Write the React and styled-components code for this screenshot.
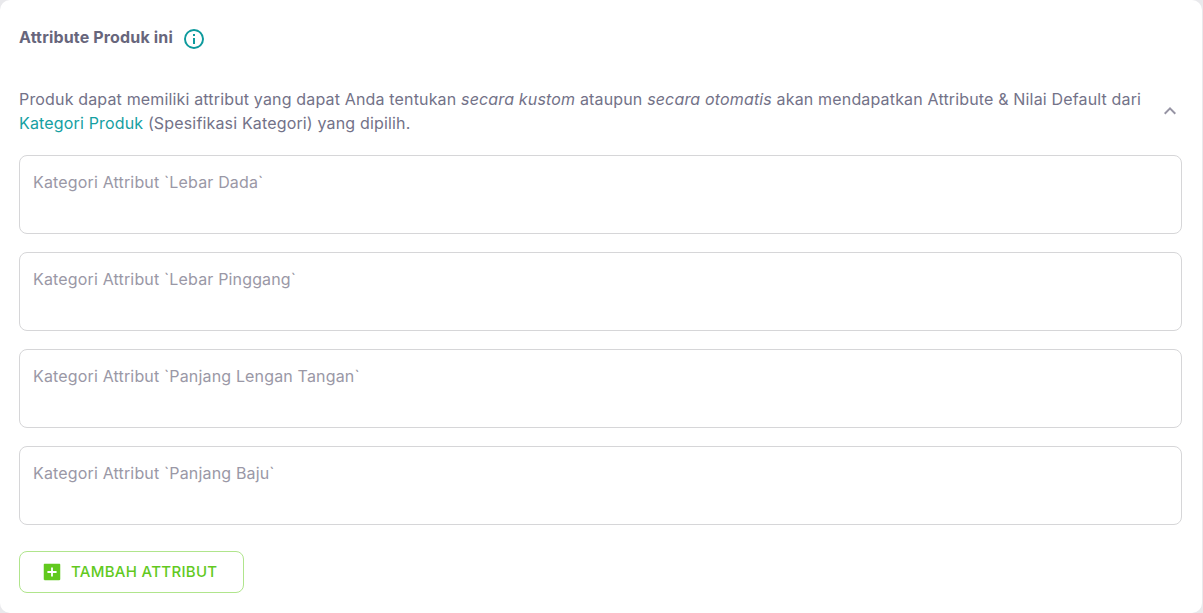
import React from "react";
import styled, { createGlobalStyle } from "styled-components";

const GlobalStyle = createGlobalStyle`
  *, *::before, *::after { box-sizing: border-box; }
  body {
    margin: 0;
    background: #e9e9ec;
    color: #737288;
    font-family: Inter, "Liberation Sans", sans-serif;
    font-size: 16px;
    font-weight: 400;
    line-height: 24px;
    letter-spacing: 0.01em;
  }
`;

const Card = styled.section`
  background: #fff;
  border-radius: 10px;
  padding: 25px 20px 20px 19px;
  margin-right: 1px;
`;

const Header = styled.header`
  display: flex;
  align-items: flex-start;
  gap: 9px;
`;

const Title = styled.h2`
  margin: 0;
  color: #67667c;
  font-size: 16px;
  font-weight: 700;
  line-height: 24px;
`;

const InfoButton = styled.button`
  display: flex;
  border: 0;
  padding: 2px 0 0;
  background: none;
  color: #0e9a9d;
  cursor: pointer;
`;

const Intro = styled.div`
  display: flex;
  align-items: center;
  justify-content: space-between;
  padding-top: 36px;
`;

const Description = styled.p`
  margin: 0;
`;

const CategoryLink = styled.a`
  color: #15a0a2;
  text-decoration: none;
`;

const ToggleButton = styled(InfoButton)`
  flex: none;
  padding: 0;
  color: #9694a4;
`;

const Fields = styled.div`
  display: grid;
  gap: 18px;
  padding: 20px 0 26px;
`;

const Field = styled.textarea`
  display: block;
  width: 100%;
  height: 79px;
  padding: 14px 13px;
  border: 1px solid #d6d6d8;
  border-radius: 8px;
  background: #fff;
  color: #737288;
  font: inherit;
  letter-spacing: inherit;
  resize: none;
  &::placeholder { color: #9a98a6; opacity: 1; }
`;

const AddButton = styled.button`
  display: flex;
  align-items: center;
  gap: 8px;
  height: 42px;
  padding: 0 26px 0 21px;
  border: 1px solid #b0e58c;
  border-radius: 8px;
  background: #fff;
  color: #62c91e;
  font: 500 15px/24px Inter, "Liberation Sans", sans-serif;
  letter-spacing: 0.02em;
  text-transform: uppercase;
  cursor: pointer;
`;

const attributes = ["Lebar Dada", "Lebar Pinggang", "Panjang Lengan Tangan", "Panjang Baju"];

const Icon = ({ size, children }) => (
  <svg width={size} height={size} viewBox="0 0 24 24" fill="currentColor" aria-hidden="true">
    {children}
  </svg>
);

export default function App() {
  return (
    <>
      <GlobalStyle />
      <Card>
        <Header>
          <Title>Attribute Produk ini</Title>
          <InfoButton type="button" aria-label="Info">
            <Icon size={24}>
              <path d="M11 9h2V7h-2m1 13c-4.41 0-8-3.59-8-8s3.59-8 8-8 8 3.59 8 8-3.59 8-8 8m0-18A10 10 0 0 0 2 12a10 10 0 0 0 10 10 10 10 0 0 0 10-10A10 10 0 0 0 12 2m-1 15h2v-6h-2v6z" />
            </Icon>
          </InfoButton>
        </Header>
        <Intro>
          <Description>
            Produk dapat memiliki attribut yang dapat Anda tentukan <em>secara kustom</em> ataupun{" "}
            <em>secara otomatis</em> akan mendapatkan Attribute &amp; Nilai Default dari{" "}
            <CategoryLink href="#kategori">Kategori Produk</CategoryLink> (Spesifikasi Kategori) yang dipilih.
          </Description>
          <ToggleButton type="button" aria-label="Tutup" aria-expanded="true">
            <Icon size={24}>
              <path d="M7.41 15.41 12 10.83l4.59 4.58L18 14l-6-6-6 6 1.41 1.41z" />
            </Icon>
          </ToggleButton>
        </Intro>
        <Fields>
          {attributes.map((name) => (
            <Field
              key={name}
              aria-label={name}
              placeholder={`Kategori Attribut \`${name}\``}
            />
          ))}
        </Fields>
        <AddButton type="button">
          <Icon size={22}>
            <path d="M17 13h-4v4h-2v-4H7v-2h4V7h2v4h4m3-8H4c-.55 0-1 .45-1 1v16c0 .55.45 1 1 1h16c.55 0 1-.45 1-1V4c0-.55-.45-1-1-1z" />
          </Icon>
          Tambah Attribut
        </AddButton>
      </Card>
    </>
  );
}
